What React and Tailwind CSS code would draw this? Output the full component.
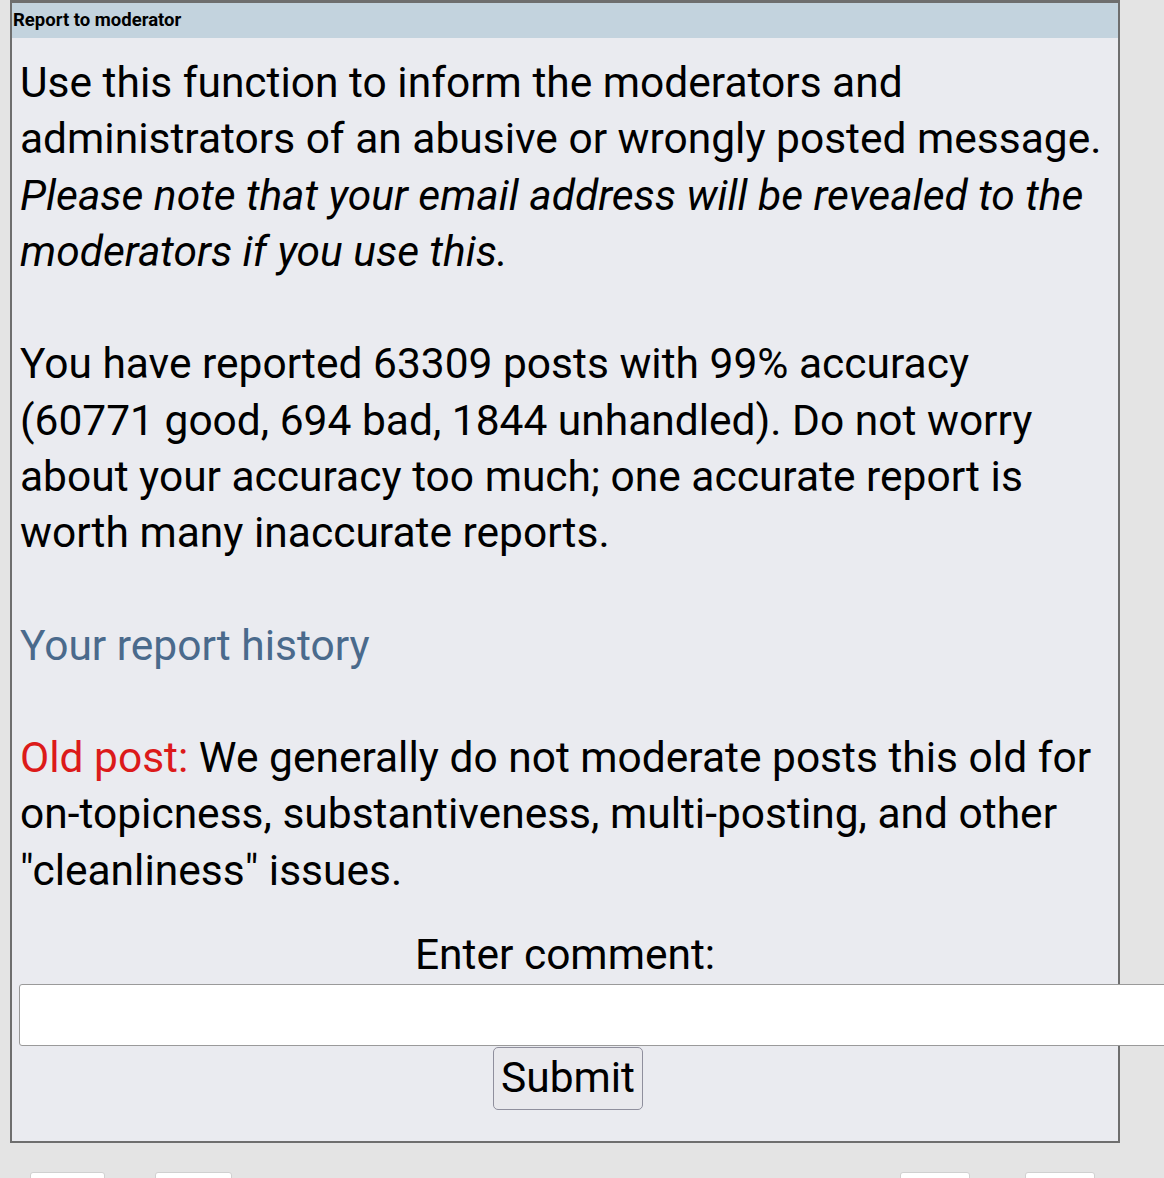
export default function App() {
  return (
    <div className="min-h-[1178px] bg-[#e4e4e4] overflow-hidden font-['Roboto',sans-serif] text-black">
      <div className="ml-[10px] w-[1110px] border-2 border-t-[3px] border-[#6e6e6e] bg-[#eaebf0]">
        <div className="h-[35px] bg-[#c3d3de] pl-[1px] flex items-center text-[18.5px] font-bold leading-none">
          Report to moderator
        </div>
        <div className="pt-[17px] pl-[8px] pr-[13px] text-[42.5px] leading-[56.25px]">
          <p>
            Use this function to inform the moderators and administrators of an abusive or wrongly posted message.{' '}
            <em>Please note that your email address will be revealed to the moderators if you use this.</em>
          </p>
          <p className="mt-[56.25px]">
            You have reported 63309 posts with 99% accuracy (60771 good, 694 bad, 1844 unhandled). Do not worry about
            your accuracy too much; one accurate report is worth many inaccurate reports.
          </p>
          <p className="mt-[56.25px]">
            <a className="text-[#4a6a8c]">Your report history</a>
          </p>
          <p className="mt-[56.25px]">
            <span className="text-[#dc1a1a]">Old post:</span> We generally do not moderate posts this old for
            on-topicness, substantiveness, multi-posting, and other "cleanliness" issues.
          </p>
        </div>
        <div className="mt-[28px] text-center text-[42.5px] leading-[56px]">Enter comment:</div>
        <input
          type="text"
          className="block mt-[1px] ml-[7px] w-[1160px] h-[62px] bg-white border border-[#9a9a9a] rounded-[3px]"
        />
        <div className="flex justify-center pb-[31px] pl-[6px]">
          <button className="mt-[1px] w-[150px] h-[63px] bg-[#e9e9ed] border border-[#8f8f9d] rounded-[5px] text-[42.5px] leading-none">
            Submit
          </button>
        </div>
      </div>
      <div className="mt-[29px] flex">
        <div className="ml-[30px] w-[75px] h-[10px] bg-white border border-[#d0d0d0] rounded-t-[3px]" />
        <div className="ml-[50px] w-[77px] h-[10px] bg-white border border-[#d0d0d0] rounded-t-[3px]" />
        <div className="ml-[668px] w-[70px] h-[10px] bg-white border border-[#d0d0d0] rounded-t-[3px]" />
        <div className="ml-[55px] w-[70px] h-[10px] bg-white border border-[#d0d0d0] rounded-t-[3px]" />
      </div>
    </div>
  );
}
